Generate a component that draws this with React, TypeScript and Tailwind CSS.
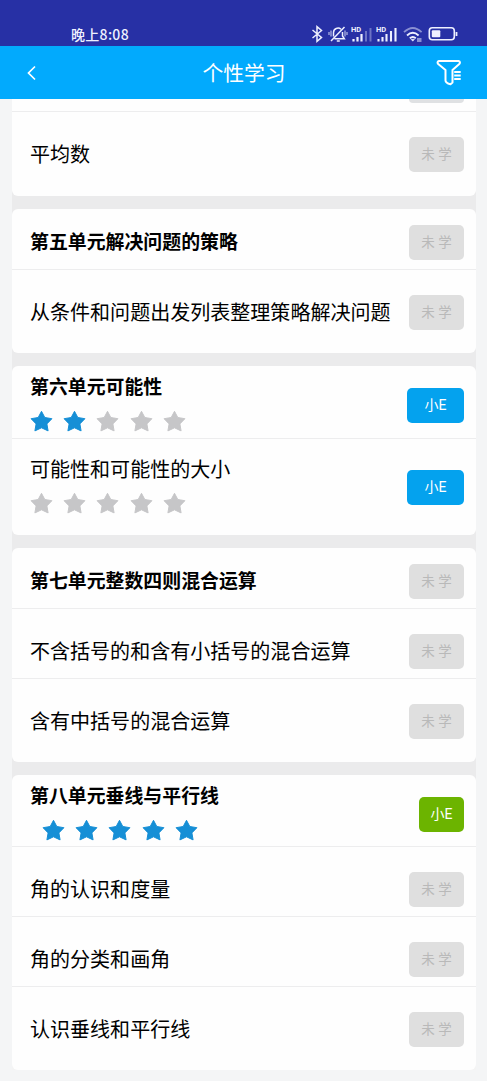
type Status = "none" | "blue" | "green";

interface Row {
  title: string;
  status: Status;
  height: string;
  header?: boolean;
  stars?: number;
  starsIndent?: boolean;
}

const units: Row[][] = [
  [
    { title: "第五单元解决问题的策略", status: "none", height: "h-[60px]", header: true },
    { title: "从条件和问题出发列表整理策略解决问题", status: "none", height: "h-[84px]" },
  ],
  [
    { title: "第六单元可能性", status: "blue", height: "h-[72px]", header: true, stars: 2 },
    { title: "可能性和可能性的大小", status: "blue", height: "h-[97px]", stars: 0 },
  ],
  [
    { title: "第七单元整数四则混合运算", status: "none", height: "h-[60px]", header: true },
    { title: "不含括号的和含有小括号的混合运算", status: "none", height: "h-[70px]" },
    { title: "含有中括号的混合运算", status: "none", height: "h-[84px]" },
  ],
  [
    { title: "第八单元垂线与平行线", status: "green", height: "h-[71px]", header: true, stars: 5, starsIndent: true },
    { title: "角的认识和度量", status: "none", height: "h-[70px]" },
    { title: "角的分类和画角", status: "none", height: "h-[70px]" },
    { title: "认识垂线和平行线", status: "none", height: "h-[84px]" },
  ],
];

function Star({ on }: { on: boolean }) {
  return (
    <svg className={`w-[23px] h-[22px] ${on ? "text-[#168fd6]" : "text-[#c6c6c8]"}`} viewBox="0 0 23 22">
      <path
        d="M11.5 1.300l3.300 6.200 7.100 1.200-5 5.200 1.200 7-6.600-3.100-6.600 3.100 1.200-7-5-5.200 7.100-1.200z"
        fill="currentColor"
        stroke="currentColor"
        strokeWidth="1"
        strokeLinejoin="round"
      />
    </svg>
  );
}

function StatusButton({ status }: { status: Status }) {
  if (status === "none") {
    return (
      <button className="block w-[55px] h-[35px] shrink-0 rounded-[5px] bg-[#dfdfdf] text-[#b9b9b9] text-[13.5px] leading-[35px] whitespace-nowrap">
        未 学
      </button>
    );
  }
  return (
    <button
      className={`block h-[35px] shrink-0 rounded-[5px] text-white text-[14px] leading-[35px] ${
        status === "blue" ? "w-[57px] bg-[#04a2ee]" : "w-[45px] bg-[#6cb400]"
      }`}
    >
      小E
    </button>
  );
}

function LessonRow({ row, first }: { row: Row; first: boolean }) {
  const hasStars = row.stars !== undefined;
  const buttonTop = row.header ? (hasStars ? "pt-[22px]" : "pt-[16px]") : hasStars ? "pt-[32px]" : "pt-[26px]";
  const textTop = row.header ? (hasStars ? "pt-[8px]" : "pt-[20px]") : hasStars ? "pt-[18px]" : "pt-[30px]";

  return (
    <div
      className={`flex items-start justify-between pl-[18px] pr-[12px] ${row.height} ${
        first ? "" : "shadow-[inset_0_1px_0_#ededee]"
      }`}
    >
      <div className={textTop}>
        <div
          className={`h-[28px] leading-[28px] whitespace-nowrap ${
            row.header ? "text-[18.9px] font-bold" : "text-[20.05px]"
          }`}
        >
          {row.title}
        </div>
        {hasStars && (
          <div className={`flex gap-[10.2px] mt-[8px] ${row.starsIndent ? "ml-[12px]" : ""}`}>
            {[0, 1, 2, 3, 4].map((i) => (
              <Star key={i} on={i < row.stars!} />
            ))}
          </div>
        )}
      </div>
      <div className={buttonTop}>
        <StatusButton status={row.status} />
      </div>
    </div>
  );
}

function StatusBar() {
  return (
    <div className="h-[46px] bg-[#2730a5] flex items-end justify-between pl-[71px] pr-[29px] text-[#eef0ff]">
      <span className="text-[14px] leading-[20px] h-[22px] tracking-[0.3px] font-['Noto_Sans_CJK_SC',sans-serif] font-medium">
        晚上8:08
      </span>
      <div className="flex items-center h-[25px]">
        {/* bluetooth */}
        <svg className="w-[12px] h-[18px]" viewBox="0 0 12 18" fill="none" stroke="currentColor" strokeWidth="1.5">
          <path d="M1.500 5l9 7.500L6 16.300V1.700l4.500 3.800-9 7.500" />
        </svg>
        {/* muted bell */}
        <svg className="w-[20px] h-[18px] ml-[5px]" viewBox="0 0 20 18" fill="none" stroke="currentColor" strokeWidth="1.500">
          <path d="M5.500 11.500V7.500a4.500 4.500 0 0 1 7.500-3.200M14.500 7v4l1.800 2.700H6.500M8.800 16h3M3 16L16.500 2" />
          <path d="M1 7v3M3 5.500v6M17 5.500v6M19 7v3" strokeWidth="1.100" opacity=".8" />
        </svg>
        {/* sim 1 */}
        <svg className="w-[22px] h-[18px] ml-[3px]" viewBox="0 0 22 18">
          <text x="0" y="7" fontSize="7.500" fontWeight="700" fontFamily="Roboto" fill="currentColor">HD</text>
          <path d="M2.500 14v2.500M6.500 12v4.500M10.500 9v7.500" stroke="currentColor" strokeWidth="2.200" />
          <path d="M15 6v10.500M19.500 3v13.500" stroke="currentColor" strokeWidth="2" opacity=".35" />
        </svg>
        {/* sim 2 */}
        <svg className="w-[22px] h-[18px] ml-[3px]" viewBox="0 0 22 18">
          <text x="0" y="7" fontSize="7.500" fontWeight="700" fontFamily="Roboto" fill="currentColor">HD</text>
          <path d="M2.500 14v2.500M6.500 12v4.500M10.500 9v7.500M15 6v10.500M19.500 3v13.500" stroke="currentColor" strokeWidth="2.100" />
        </svg>
        {/* wifi */}
        <svg className="w-[20px] h-[18px] ml-[5px]" viewBox="0 0 20 18" fill="none" stroke="currentColor" strokeWidth="1.800">
          <path d="M1 7.200q8.800-8.500 17.600 0" opacity=".5" />
          <path d="M4 10.500q5.800-5.600 11.600 0" />
          <path d="M6.800 13.300q3-2.600 6 0" />
          <path d="M8 14.300h3.500l-1.700 1.900z" fill="currentColor" strokeWidth=".5" />
          <path d="M14 14h4.500M14 16h4.500" strokeWidth="1.100" />
        </svg>
        {/* battery */}
        <svg className="w-[30px] h-[18px] ml-[5px]" viewBox="0 0 30 18">
          <rect x="1.300" y="2.800" width="25" height="12" rx="3" fill="none" stroke="currentColor" strokeWidth="1.600" />
          <rect x="3.800" y="5.300" width="8.500" height="7" rx="1" fill="currentColor" />
          <path d="M28.500 7v4" stroke="currentColor" strokeWidth="1.800" />
        </svg>
      </div>
    </div>
  );
}

export default function App() {
  return (
    <div className="w-full h-[1081px] overflow-hidden bg-[#f4f5f6] text-black font-['Roboto','Noto_Sans_CJK_SC',sans-serif]">
      <StatusBar />

      <div className="h-[53px] bg-[#02aafd] flex items-center justify-between pl-[26px] pr-[24px] text-white">
        <svg className="w-[12px] h-[18px]" viewBox="0 0 12 18" fill="none" stroke="currentColor" strokeWidth="1.700">
          <path d="M9 2.500L2.500 9 9 15.500" />
        </svg>
        <h1 className="text-[20.8px] leading-[30px] pl-[14px] pt-[2px]">个性学习</h1>
        <svg
          className="w-[27px] h-[27px]"
          viewBox="0 0 27 27"
          fill="none"
          stroke="currentColor"
          strokeWidth="2"
          strokeLinejoin="round"
        >
          <path d="M3 2h19.500q2.500 1 .8 3L16.500 11v12.500l-2 1.800q-5-1.300-5-3.800V11L2.200 5Q.5 3 3 2z" />
          <path d="M18.200 13h6.500M18.200 16.500h6.500M18.200 20h6.500" />
        </svg>
      </div>

      <div className="mx-[12px] mr-[11px]">
        <div className="bg-[#ebebec]">
          <div className="h-[97px] rounded-b-[6px] bg-[#fefefe]">
            <div className="h-[12px] flex justify-end pr-[12px]">
              <div className="w-[55px] h-[4px] rounded-b-[5px] bg-[#dfe1e3]" />
            </div>
            <div className="flex items-start justify-between h-[85px] pl-[18px] pr-[12px] shadow-[inset_0_1px_0_#ededee]">
              <div className="pt-[30px] text-[20.05px] leading-[28px]">平均数</div>
              <div className="pt-[26px]">
                <StatusButton status="none" />
              </div>
            </div>
          </div>

          {units.map((rows) => (
            <div key={rows[0].title} className="pt-[13px] last:bg-[linear-gradient(#ebebec_50%,#f4f4f4_50%)]">
              <div className="rounded-[6px] bg-[#fefefe] overflow-hidden">
                {rows.map((row, i) => (
                  <LessonRow key={row.title} row={row} first={i === 0} />
                ))}
              </div>
            </div>
          ))}
        </div>
      </div>
    </div>
  );
}
